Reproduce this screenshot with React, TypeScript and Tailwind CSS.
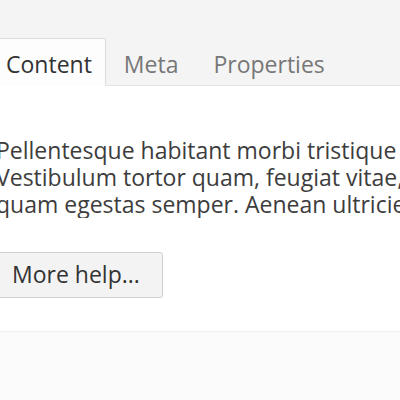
import React, { useState } from 'react';

const tabs = ['Content', 'Meta', 'Properties'];

export default function App() {
  const [active, setActive] = useState('Content');

  return (
    <div className="w-[400px] h-[400px] overflow-hidden bg-[#fbfbfb] font-['Open_Sans',sans-serif] flex flex-col">
      {/* tab strip */}
      <div className="bg-[#f4f4f4] pt-[38px] flex items-end border-b border-[#e3e3e3]">
        {tabs.map((tab, i) => (
          <button
            key={tab}
            onClick={() => setActive(tab)}
            className={`h-[48px] text-[23px] leading-none flex items-center pt-[4px] -mb-px ${
              i === 0 ? 'ml-[-11px] pl-[16px] pr-[13px]' : 'ml-[1px] px-[16px]'
            } ${
              active === tab
                ? 'bg-[#fdfdfd] border border-b-0 border-[#dcdcdc] rounded-tr-[2px] text-[#333]'
                : 'text-[#777] border border-transparent'
            }`}
          >
            {tab}
          </button>
        ))}
      </div>

      {/* panel body */}
      <div className="bg-white h-[246px] border-b border-[#f1f1f1] ml-[-4px] pt-[51px] shrink-0 overflow-hidden">
        <p className="text-[23px] leading-[27px] text-[#3d3d3d] whitespace-nowrap overflow-hidden">
          Pellentesque habitant morbi tristique senectus et netus.
          <br />
          Vestibulum tortor quam, feugiat vitae, ultricies eget,
          <br />
          quam egestas semper. Aenean ultricies mi vitae est.
        </p>
        <button className="mt-[34px] ml-[-4px] h-[46px] pl-[19px] pr-[22px] bg-[#f3f3f3] border border-[#cfcfcf] rounded-[3px] text-[23px] leading-none text-[#333] flex items-center pb-[2px]">
          More help...
        </button>
      </div>
    </div>
  );
}
